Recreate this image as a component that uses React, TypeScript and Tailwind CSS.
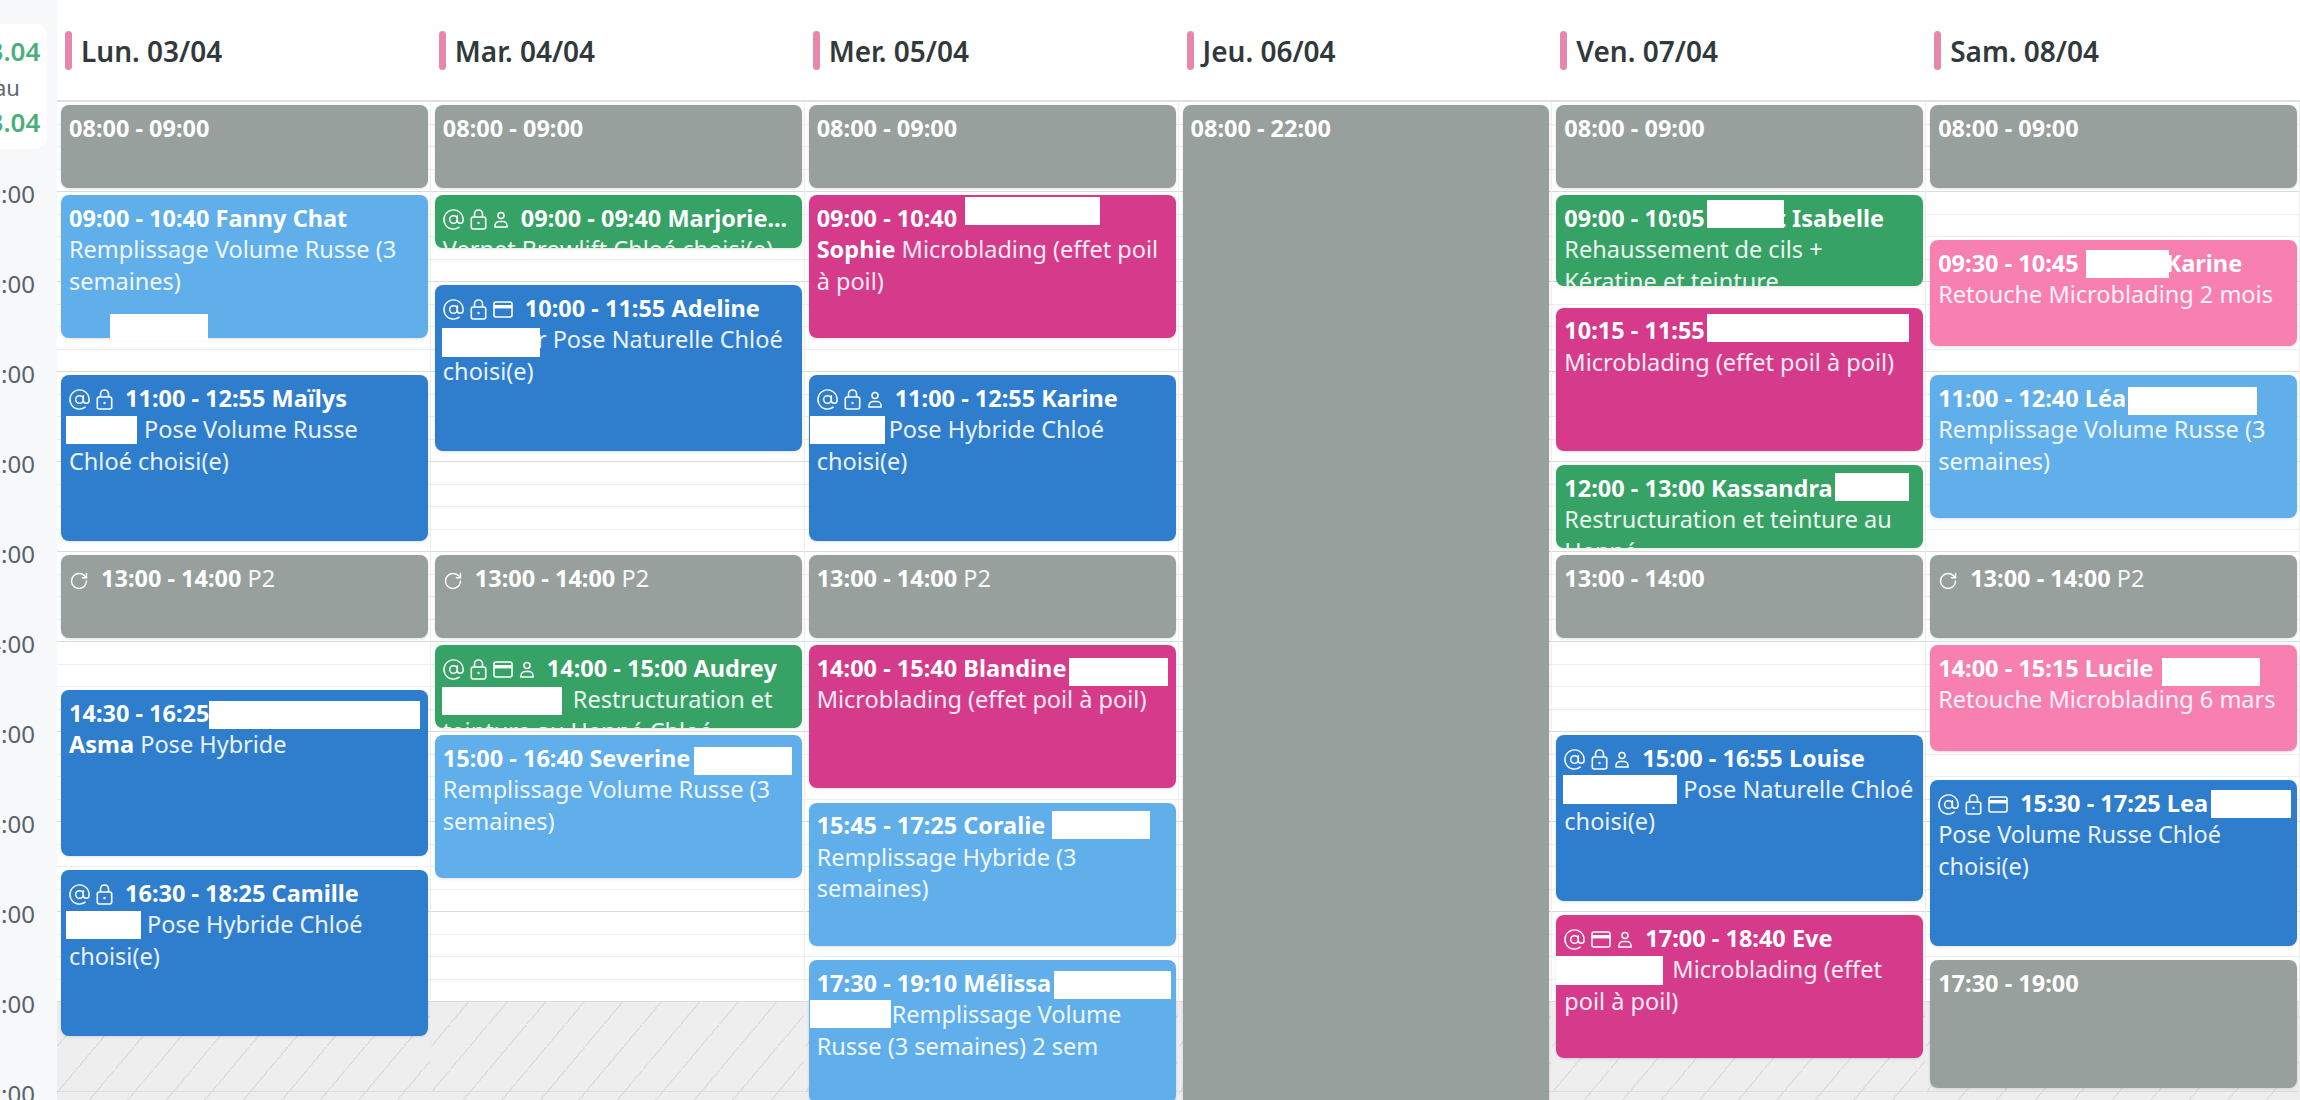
import React from "react";
import { AtSign, RotateCw } from "lucide-react";

type IconName = "at" | "lock" | "card" | "user" | "refresh";

interface CalEvent {
  col: number;
  start: string;
  end: string;
  color: string;
  icons?: IconName[];
  title: string;
  titleGap?: number;
  titleEnd?: string;
  br?: boolean;
  gap?: number;
  desc?: string;
}

const GRAY = "bg-[#98a09d]";
const LIGHT = "bg-[#60afea]";
const BLUE = "bg-[#2f7ecd]";
const GREEN = "bg-[#36a265]";
const MAGENTA = "bg-[#d63a8a]";
const PINK = "bg-[#f780b1]";

const days = ["Lun. 03/04", "Mar. 04/04", "Mer. 05/04", "Jeu. 06/04", "Ven. 07/04", "Sam. 08/04"];
const hours = ["09:00", "10:00", "11:00", "12:00", "13:00", "14:00", "15:00", "16:00", "17:00", "18:00", "19:00"];

const events: CalEvent[] = [
  { col: 0, start: "08:00", end: "09:00", color: GRAY, title: "08:00 - 09:00" },
  { col: 0, start: "09:00", end: "10:40", color: LIGHT, title: "09:00 - 10:40 Fanny Chat", desc: "Remplissage Volume Russe (3 semaines)" },
  { col: 0, start: "11:00", end: "12:55", color: BLUE, icons: ["at", "lock"], title: "11:00 - 12:55 Maïlys", br: true, gap: 75, desc: "Pose Volume Russe Chloé choisi(e)" },
  { col: 0, start: "13:00", end: "14:00", color: GRAY, icons: ["refresh"], title: "13:00 - 14:00", desc: "P2" },
  { col: 0, start: "14:30", end: "16:25", color: BLUE, title: "14:30 - 16:25\nAsma", desc: "Pose Hybride" },
  { col: 0, start: "16:30", end: "18:25", color: BLUE, icons: ["at", "lock"], title: "16:30 - 18:25 Camille", br: true, gap: 78, desc: "Pose Hybride Chloé choisi(e)" },

  { col: 1, start: "08:00", end: "09:00", color: GRAY, title: "08:00 - 09:00" },
  { col: 1, start: "09:00", end: "09:40", color: GREEN, icons: ["at", "lock", "user"], title: "09:00 - 09:40 Marjorie...", br: true, desc: "Vernet Browlift Chloé choisi(e)" },
  { col: 1, start: "10:00", end: "11:55", color: BLUE, icons: ["at", "lock", "card"], title: "10:00 - 11:55 Adeline", br: true, gap: 94, desc: "r Pose Naturelle Chloé choisi(e)" },
  { col: 1, start: "13:00", end: "14:00", color: GRAY, icons: ["refresh"], title: "13:00 - 14:00", desc: "P2" },
  { col: 1, start: "14:00", end: "15:00", color: GREEN, icons: ["at", "lock", "card", "user"], title: "14:00 - 15:00 Audrey", br: true, gap: 130, desc: "Restructuration et teinture au Henné Chloé" },
  { col: 1, start: "15:00", end: "16:40", color: LIGHT, title: "15:00 - 16:40 Severine", br: true, desc: "Remplissage Volume Russe (3 semaines)" },

  { col: 2, start: "08:00", end: "09:00", color: GRAY, title: "08:00 - 09:00" },
  { col: 2, start: "09:00", end: "10:40", color: MAGENTA, title: "09:00 - 10:40\nSophie", desc: "Microblading (effet poil à poil)" },
  { col: 2, start: "11:00", end: "12:55", color: BLUE, icons: ["at", "lock", "user"], title: "11:00 - 12:55 Karine", br: true, gap: 72, desc: "Pose Hybride Chloé choisi(e)" },
  { col: 2, start: "13:00", end: "14:00", color: GRAY, title: "13:00 - 14:00", desc: "P2" },
  { col: 2, start: "14:00", end: "15:40", color: MAGENTA, title: "14:00 - 15:40 Blandine", br: true, desc: "Microblading (effet poil à poil)" },
  { col: 2, start: "15:45", end: "17:25", color: LIGHT, title: "15:45 - 17:25 Coralie", br: true, desc: "Remplissage Hybride (3 semaines)" },
  { col: 2, start: "17:30", end: "19:10", color: LIGHT, title: "17:30 - 19:10 Mélissa", br: true, gap: 75, desc: "Remplissage Volume Russe (3 semaines) 2 sem" },

  { col: 3, start: "08:00", end: "22:00", color: GRAY, title: "08:00 - 22:00" },

  { col: 4, start: "08:00", end: "09:00", color: GRAY, title: "08:00 - 09:00" },
  { col: 4, start: "09:00", end: "10:05", color: GREEN, title: "09:00 - 10:05", titleGap: 71, titleEnd: "t Isabelle", br: true, desc: "Rehaussement de cils + Kératine et teinture" },
  { col: 4, start: "10:15", end: "11:55", color: MAGENTA, title: "10:15 - 11:55", br: true, desc: "Microblading (effet poil à poil)" },
  { col: 4, start: "12:00", end: "13:00", color: GREEN, title: "12:00 - 13:00 Kassandra", br: true, desc: "Restructuration et teinture au Henné" },
  { col: 4, start: "13:00", end: "14:00", color: GRAY, title: "13:00 - 14:00" },
  { col: 4, start: "15:00", end: "16:55", color: BLUE, icons: ["at", "lock", "user"], title: "15:00 - 16:55 Louise", br: true, gap: 119, desc: "Pose Naturelle Chloé choisi(e)" },
  { col: 4, start: "17:00", end: "18:40", color: MAGENTA, icons: ["at", "card", "user"], title: "17:00 - 18:40 Eve", br: true, gap: 108, desc: "Microblading (effet poil à poil)" },

  { col: 5, start: "08:00", end: "09:00", color: GRAY, title: "08:00 - 09:00" },
  { col: 5, start: "09:30", end: "10:45", color: PINK, title: "09:30 - 10:45", titleGap: 87, titleEnd: "Karine", br: true, desc: "Retouche Microblading 2 mois" },
  { col: 5, start: "11:00", end: "12:40", color: LIGHT, title: "11:00 - 12:40 Léa", br: true, desc: "Remplissage Volume Russe (3 semaines)" },
  { col: 5, start: "13:00", end: "14:00", color: GRAY, icons: ["refresh"], title: "13:00 - 14:00", desc: "P2" },
  { col: 5, start: "14:00", end: "15:15", color: PINK, title: "14:00 - 15:15 Lucile", br: true, desc: "Retouche Microblading 6 mars" },
  { col: 5, start: "15:30", end: "17:25", color: BLUE, icons: ["at", "lock", "card"], title: "15:30 - 17:25 Lea", br: true, desc: "Pose Volume Russe Chloé choisi(e)" },
  { col: 5, start: "17:30", end: "19:00", color: GRAY, title: "17:30 - 19:00" },
];

// white masks that hide client surnames in the screenshot
const masks = [
  "left-[110px] top-[314px] w-[98px] h-[26px]",
  "left-[66px] top-[416px] w-[71px] h-[28px]",
  "left-[209px] top-[701px] w-[211px] h-[28px]",
  "left-[66px] top-[911px] w-[75px] h-[28px]",
  "left-[442px] top-[328px] w-[98px] h-[29px]",
  "left-[442px] top-[687px] w-[120px] h-[28px]",
  "left-[694px] top-[747px] w-[98px] h-[28px]",
  "left-[965px] top-[197px] w-[135px] h-[28px]",
  "left-[810px] top-[416px] w-[75px] h-[28px]",
  "left-[1069px] top-[658px] w-[99px] h-[28px]",
  "left-[1052px] top-[811px] w-[98px] h-[28px]",
  "left-[1054px] top-[971px] w-[117px] h-[28px]",
  "left-[810px] top-[1000px] w-[81px] h-[28px]",
  "left-[1707px] top-[200px] w-[77px] h-[28px]",
  "left-[1707px] top-[314px] w-[202px] h-[28px]",
  "left-[1835px] top-[473px] w-[74px] h-[28px]",
  "left-[1563px] top-[775px] w-[114px] h-[29px]",
  "left-[1556px] top-[956px] w-[107px] h-[29px]",
  "left-[2086px] top-[250px] w-[83px] h-[28px]",
  "left-[2128px] top-[387px] w-[129px] h-[28px]",
  "left-[2162px] top-[658px] w-[98px] h-[28px]",
  "left-[2211px] top-[790px] w-[80px] h-[28px]",
];

const toHours = (t: string) => {
  const [h, m] = t.split(":").map(Number);
  return h + m / 60;
};

const LockIcon = () => (
  <svg width="17" height="21" viewBox="0 0 17 21" fill="none" stroke="currentColor" strokeWidth="1.6">
    <rect x="1.3" y="8" width="14.4" height="12" rx="2" />
    <path d="M4.5 8V5a4 4 0 0 1 8 0v3" />
    <circle cx="8.5" cy="14" r="1.2" fill="currentColor" stroke="none" />
  </svg>
);

const CardIcon = () => (
  <svg width="20" height="17" viewBox="0 0 20 17" fill="none" stroke="currentColor" strokeWidth="1.6">
    <rect x="1" y="1" width="18" height="15" rx="2" />
    <rect x="1" y="4" width="18" height="3.4" fill="currentColor" stroke="none" />
  </svg>
);

const UserIcon = () => (
  <svg width="16" height="17" viewBox="0 0 16 17" fill="none" stroke="currentColor" strokeWidth="1.5">
    <circle cx="8" cy="4.5" r="3" />
    <path d="M2 16v-1.5a4 4 0 0 1 4-4h4a4 4 0 0 1 4 4V16z" />
  </svg>
);

const EventIcon = ({ name }: { name: IconName }) => {
  if (name === "at") return <AtSign size={23} strokeWidth={1.5} className="-mx-px" />;
  if (name === "lock") return <LockIcon />;
  if (name === "card") return <CardIcon />;
  if (name === "user") return <UserIcon />;
  return <RotateCw size={20} strokeWidth={1.7} />;
};

const EventCard = ({ event }: { event: CalEvent }) => {
  const top = (toHours(event.start) - 8) * 90 + 3;
  const height = (toHours(event.end) - toHours(event.start)) * 90 - 7;
  return (
    <div
      className={`absolute left-[4px] right-[2px] z-10 overflow-hidden rounded-lg px-[8px] py-[7.5px] text-[23.5px] leading-[31.6px] text-white shadow-[0_1px_3px_rgba(0,0,0,0.12)] ${event.color}`}
      style={{ top, height }}
    >
      {event.icons && (
        <span className="mr-[12px] inline-flex items-center gap-[6px] align-[-4px]">
          {event.icons.map((name) => (
            <EventIcon key={name} name={name} />
          ))}
        </span>
      )}
      <b className="whitespace-pre-line font-bold">{event.title}</b>
      {event.titleGap && <span className="inline-block" style={{ width: event.titleGap }} />}
      {event.titleEnd && <b className="font-bold">{event.titleEnd}</b>}
      {event.br ? <br /> : event.desc ? " " : null}
      {event.gap && <span className="inline-block" style={{ width: event.gap }} />}
      {event.desc && <span className="text-white/90">{event.desc}</span>}
    </div>
  );
};

const Slots = ({ from, to }: { from: number; to: number }) => (
  <>
    {Array.from({ length: to - from }, (_, i) => (
      <div
        key={i}
        className={`h-[22.5px] border-b ${(from + i + 1) % 4 === 0 ? "border-[#d9dcdc]" : "border-[#eeeeee]"}`}
      />
    ))}
  </>
);

export default function App() {
  return (
    <div className="relative flex h-[1100px] w-[2300px] overflow-hidden bg-white font-['Noto_Sans',sans-serif]">
      {/* Hours column */}
      <div className="w-[57px] shrink-0 overflow-hidden bg-[#f6f8fa] pt-[24px]">
        <div className="mr-[10px] flex h-[125px] justify-end rounded-r-xl bg-white pr-[5px] pt-[10px]">
          <div className="flex w-[70px] shrink-0 flex-col items-center text-[26px] leading-[35.5px]">
            <span className="font-semibold text-[#4cae7b]">03.04</span>
            <span className="text-[22px] text-[#5d6670]">au</span>
            <span className="font-semibold text-[#4cae7b]">03.04</span>
          </div>
        </div>
        {hours.map((h) => (
          <div key={h} className="flex h-[90px] items-center justify-end overflow-hidden pr-[22px] text-[24px] text-[#59626b]">
            <span className="shrink-0">{h}</span>
          </div>
        ))}
      </div>

      <div className="min-w-0 flex-1">
        {/* Day headers */}
        <div className="grid h-[102px] grid-cols-6 border-b-2 border-[#dfe1e1]">
          {days.map((d) => (
            <div key={d} className="flex items-start gap-[9px] pl-[8px] pt-[31px]">
              <div className="h-[39px] w-[7px] rounded-full bg-[#e886ac]" />
              <span className="text-[28px] font-semibold leading-[40px] text-[#32393d]">{d}</span>
            </div>
          ))}
        </div>

        {/* Week grid */}
        <div className="grid grid-cols-6">
          {days.map((d, col) => (
            <div key={d} className="relative border-r border-[#eeeeee]">
              <Slots from={0} to={40} />
              <div className="bg-[#eeeeee] bg-[repeating-linear-gradient(130deg,transparent_0,transparent_28px,#dedede_28px,#dedede_29.5px)]">
                <Slots from={40} to={46} />
              </div>
              {events
                .filter((e) => e.col === col)
                .map((e) => (
                  <EventCard key={e.start} event={e} />
                ))}
            </div>
          ))}
        </div>
      </div>

      {masks.map((m) => (
        <div key={m} className={`absolute z-20 bg-white ${m}`} />
      ))}
    </div>
  );
}
